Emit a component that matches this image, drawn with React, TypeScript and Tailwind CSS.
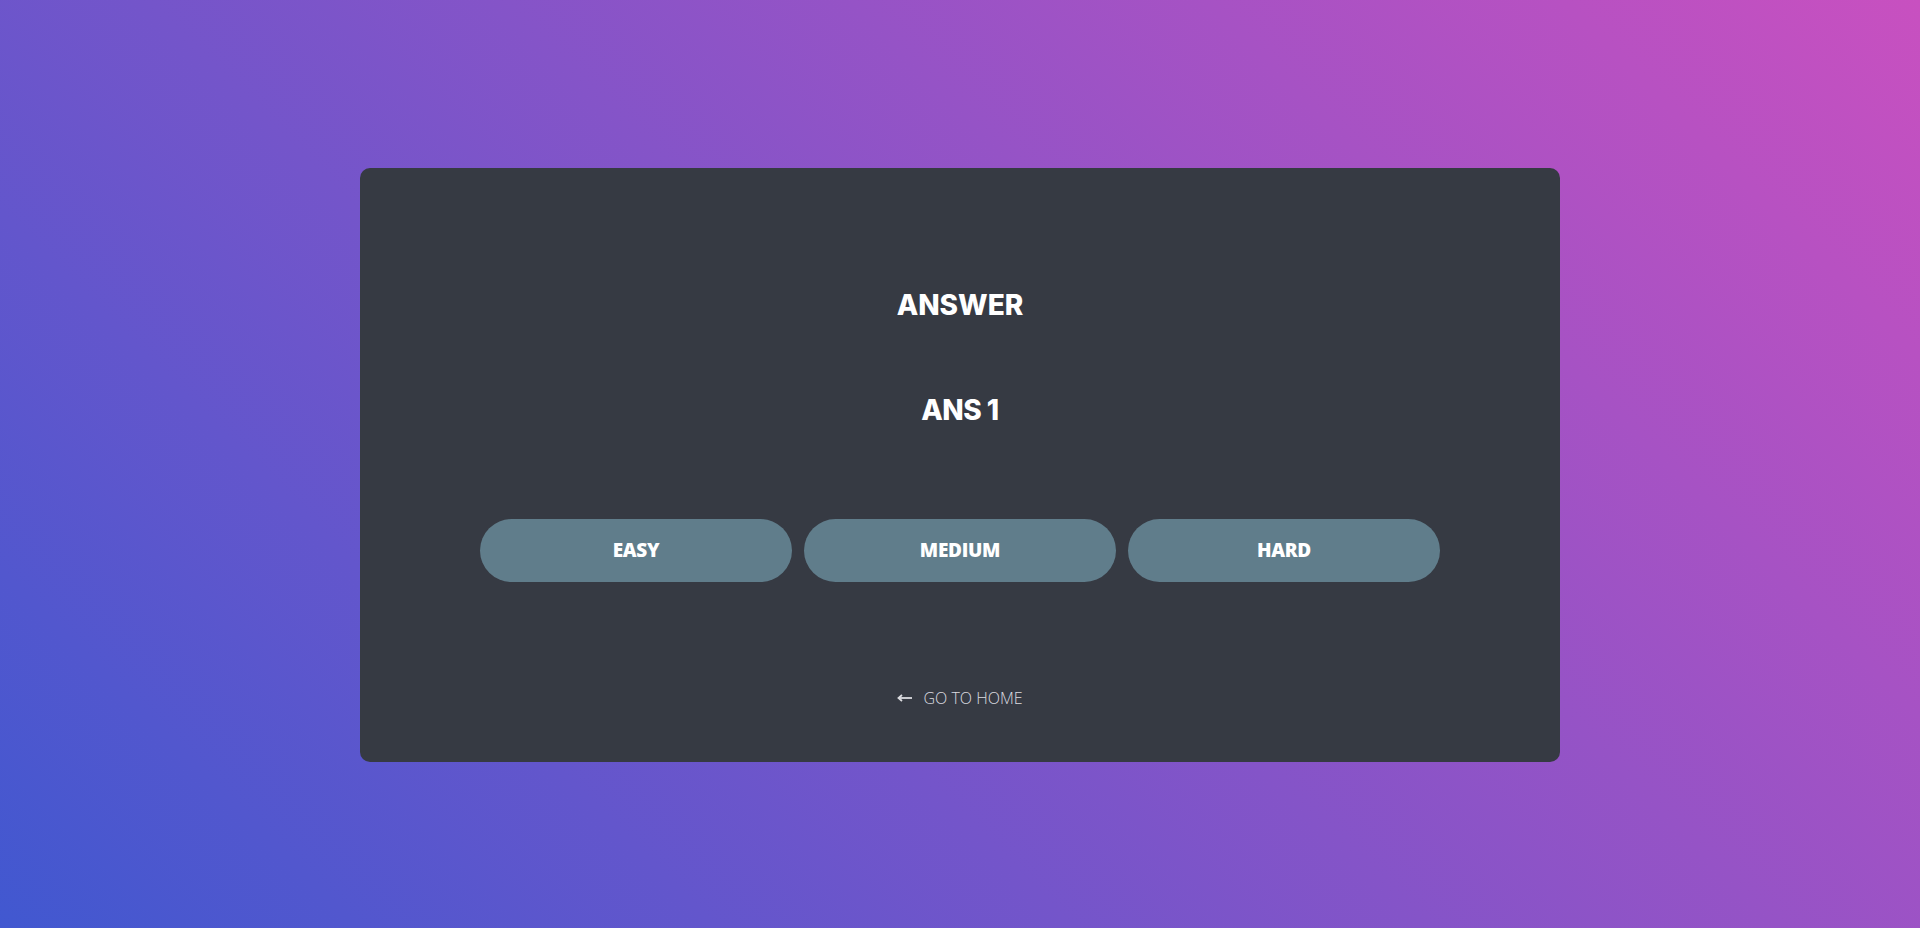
import React from "react";

export default function App() {
  return (
    <div className="w-full h-[928px] pt-[2px] flex items-center justify-center bg-[linear-gradient(45deg,#4158D0,#C850C0)]">
      <div className="w-[1200px] h-[594px] rounded-[10px] bg-[#363a43] flex flex-col items-center pt-[117px]">
        <h1 className="text-white text-[28px] leading-[40px] font-extrabold tracking-[0px] font-['Inter',sans-serif]">
          ANSWER
        </h1>
        <p className="mt-[65px] text-white text-[28px] leading-[40px] font-extrabold tracking-[-0.5px] font-['Inter',sans-serif]">
          ANS 1
        </p>
        <div className="mt-[89px] w-[960px] grid grid-cols-3 gap-[12px]">
          {["EASY", "MEDIUM", "HARD"].map((l) => (
            <button
              key={l}
              className="h-[63px] rounded-full bg-[#607d8b] text-white text-[19px] font-extrabold font-['Open_Sans',sans-serif] tracking-[-0.3px]"
            >
              {l}
            </button>
          ))}
        </div>
        <a className="mt-[104px] flex items-center gap-[10px] h-[24px] text-[#dcdce0] text-[16px] font-light font-['Open_Sans',sans-serif] cursor-pointer">
          <svg width="16" height="10" viewBox="0 0 16 10" fill="none" stroke="#dcdce0" strokeWidth="1.8">
            <path d="M15 5H2" />
            <path d="M5 2L1.5 5L5 8" />
          </svg>
          <span>GO TO HOME</span>
        </a>
      </div>
    </div>
  );
}
